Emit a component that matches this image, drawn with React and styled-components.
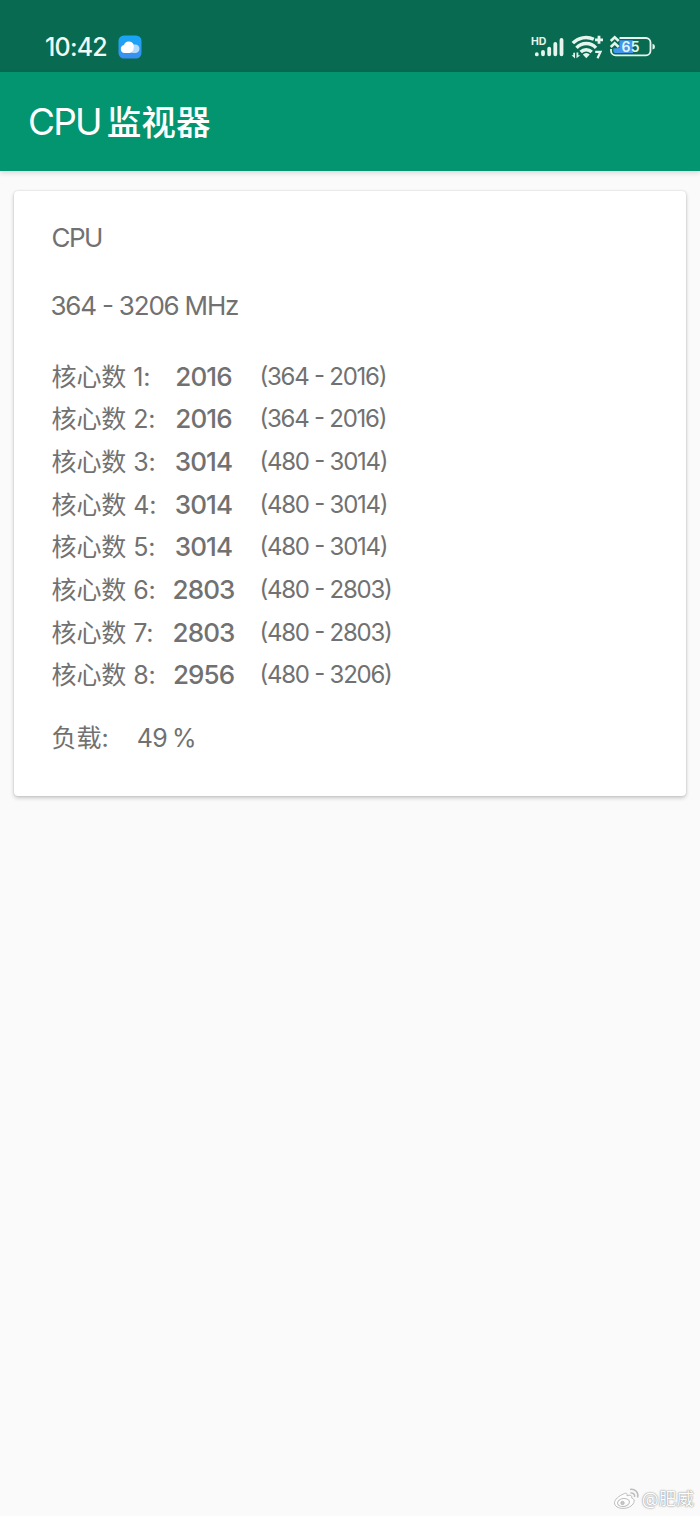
import React from "react";
import styled, { createGlobalStyle } from "styled-components";

const GlobalStyle = createGlobalStyle`
  body {
    margin: 0;
    background: #fafafa;
    color: #717171;
    font-family: Inter, "Noto Sans CJK SC", sans-serif;
  }
`;

const Screen = styled.div`
  display: flex;
  flex-direction: column;
  height: 1516px;
  overflow: hidden;
`;

const StatusBar = styled.div`
  display: flex;
  flex: none;
  align-items: center;
  height: 72px;
  box-sizing: border-box;
  padding: 21px 44px 0 45px;
  background: #086a51;
  color: #f0faf6;
`;

const Clock = styled.span`
  width: 73px;
  font-size: 25px;
  font-weight: 500;
  letter-spacing: -0.8px;
  white-space: nowrap;
`;

const StatusIcons = styled.svg`
  margin-left: auto;
`;

const AppBar = styled.header`
  display: flex;
  flex: none;
  align-items: center;
  gap: 6px;
  height: 99px;
  padding-left: 28px;
  background: #03956f;
  color: #fff;
  box-shadow: 0 2px 5px rgba(0, 0, 0, 0.14);
`;

const Title = styled.span`
  font-size: ${(p) => p.$size}px;
  font-weight: ${(p) => p.$weight || 400};
  letter-spacing: ${(p) => p.$spacing || 0}px;
  line-height: 50px;
`;

const Card = styled.section`
  display: flex;
  flex: none;
  flex-direction: column;
  box-sizing: border-box;
  height: 605px;
  margin: 20px 14px 0;
  padding: 29px 38px 0 37.5px;
  border-radius: 4px;
  background: #fff;
  box-shadow: 0 2px 4px rgba(0, 0, 0, 0.2), 0 0 2px rgba(0, 0, 0, 0.16);
`;

const Line = styled.div`
  height: 36px;
  font-size: 26px;
  line-height: 36px;
  letter-spacing: ${(p) => p.$spacing || 0}px;
  white-space: nowrap;
`;

const Range = styled(Line)`
  margin-top: 32px;
  margin-left: -1px;
  font-feature-settings: "case";
`;

const CoreTable = styled.div`
  display: grid;
  grid-template-columns: 114px 76px auto;
  grid-auto-rows: 42.65px;
  align-items: center;
  margin-top: 31.5px;
`;

const CoreName = styled.span`
  font-size: 25px;
  line-height: 36px;
  letter-spacing: -0.1px;
  white-space: nowrap;
`;

const CoreFreq = styled.span`
  font-size: 26px;
  font-weight: 500;
  line-height: 36px;
  letter-spacing: -0.9px;
  text-align: center;
`;

const CoreRange = styled.span`
  padding-left: 18px;
  font-size: 24px;
  line-height: 36px;
  letter-spacing: -1.25px;
  white-space: nowrap;
  font-feature-settings: "case";
`;

const Load = styled(Line)`
  display: flex;
  gap: 28px;
  margin-top: 23px;
  font-size: 25px;
`;

const LoadValue = styled.span`
  letter-spacing: -0.5px;
  word-spacing: -2px;
`;

const Watermark = styled.footer`
  display: flex;
  align-items: center;
  gap: 2px;
  margin: auto 6px 4px auto;
  color: #fdfdfd;
  font-size: 17.6px;
  line-height: 26px;
  text-shadow: 0 0 1px #888, 0 0 2px #aaa;
`;

const cores = [
  [2016, 364, 2016],
  [2016, 364, 2016],
  [3014, 480, 3014],
  [3014, 480, 3014],
  [3014, 480, 3014],
  [2803, 480, 2803],
  [2803, 480, 2803],
  [2956, 480, 3206],
];

const CloudIcon = () => (
  <svg width="24" height="24" viewBox="0 0 24 24">
    <defs>
      <linearGradient id="sky" x1="0" y1="0" x2="0" y2="1">
        <stop offset="0" stopColor="#16a8f7" />
        <stop offset="1" stopColor="#3c8eee" />
      </linearGradient>
    </defs>
    <rect x="0.5" y="0.5" width="23" height="23" rx="5.5" fill="url(#sky)" />
    <rect x="11" y="9.500" width="10.500" height="8.500" rx="4.200" fill="#b5dcff" />
    <path
      d="M6.500 18a4 4 0 0 1-.5-7.900 5 5 0 0 1 9.800 1.300c0 3.800-1.800 6.600-4.800 6.600z"
      fill="#fff"
    />
  </svg>
);

const SystemIcons = () => (
  <StatusIcons width="128" height="28" viewBox="528 33 128 28" fill="#e5f5ee">
    <text x="531" y="44.5" fontSize="10.5" fontWeight="700">
      HD
    </text>
    <g stroke="#e5f5ee" strokeWidth="3.8" strokeLinecap="round">
      <path d="M536.8 54.2v.2M543 51.8v2.500M549.200 48.600v5.700M555.300 44v10.300M561.500 40v14.300" />
    </g>
    <g fill="none" stroke="#e5f5ee" strokeWidth="3.4">
      <path d="M572.8 43.2a18.4 18.4 0 0 1 21-4M576.5 47.8a13.3 13.3 0 0 1 19.5 0M580.7 52a7.7 7.7 0 0 1 11 0" />
      <path d="M599 35.800v8M595 39.800h8" strokeWidth="2.8" />
      <path d="M595.2 51.800h5.300l-3 6.400" strokeWidth="2.2" />
    </g>
    <path d="M582.8 54.5a4.8 4.8 0 0 1 7 0l-3.5 3.8z" />
    <path d="M571.5 55.200h1.800v-2.400h1.700v5.800zM576.500 52.500v5.800l3.800-3h-2v-2.800z" />
    <path
      d="M619.5 38H646a4.5 4.5 0 0 1 4.5 4.5v8.3a4.5 4.5 0 0 1-4.5 4.5h-30.5a4.5 4.5 0 0 1-4.5-4.5V49"
      fill="none"
      stroke="#e5f5ee"
      strokeWidth="1.8"
    />
    <path d="M619.500 40.200h13.500v12.900h-16.500q-3.200 0-3.200-3.200V48.500l6.200-.5z" fill="#4395ee" />
    <path
      d="M610.7 41l4-3.700 4 3.700M610.7 47l4-3.700 4 3.700"
      fill="none"
      stroke="#e5f5ee"
      strokeWidth="2.5"
    />
    <path d="M652.5 43.8q2.5.5 2.5 2.9t-2.5 2.9z" />
    <text x="621.5" y="51.7" fontSize="14" fontWeight="600" letterSpacing="0.2">
      65
    </text>
  </StatusIcons>
);

const WeiboIcon = () => (
  <svg width="26" height="24" viewBox="0 0 26 24" fill="#fdfdfd" stroke="#bdbdbd" strokeWidth="1">
    <path d="M9.500 7c2.200-1.400 4.200-.9 3.500 1.800 3-1.200 5.400-.5 4.600 2.100 2.400.8 3.200 2.500 2.200 4.700-1.500 3.600-6 5.800-10.700 5.800C4.300 21.400.5 19.300.5 15.800.5 12.500 5 8.800 9.500 7z" />
    <ellipse cx="9.500" cy="15.500" rx="6" ry="4" transform="rotate(-8 9.500 15.500)" />
    <circle cx="8.500" cy="16" r="1.700" fill="#c6c6c6" />
    <path
      d="M16 2.500c5-.9 9 3 7.600 8M16.500 6c2.700-.5 4.700 1.500 4 4"
      fill="none"
      strokeWidth="1.5"
    />
  </svg>
);

const App = () => (
  <>
    <GlobalStyle />
    <Screen>
      <StatusBar>
        <Clock>10:42</Clock>
        <CloudIcon />
        <SystemIcons />
      </StatusBar>
      <AppBar>
        <Title $size={37} $spacing={-1.8}>
          CPU
        </Title>
        <Title $size={34.6} $weight={500}>
          监视器
        </Title>
      </AppBar>
      <Card>
        <Line $spacing={-1.5}>CPU</Line>
        <Range $spacing={-1.2}>364 - 3206 MHz</Range>
        <CoreTable>
          {cores.map(([freq, min, max], i) => (
            <React.Fragment key={i}>
              <CoreName>核心数 {i + 1}:</CoreName>
              <CoreFreq>{freq}</CoreFreq>
              <CoreRange>
                ({min} - {max})
              </CoreRange>
            </React.Fragment>
          ))}
        </CoreTable>
        <Load>
          <span>负载:</span>
          <LoadValue>49 %</LoadValue>
        </Load>
      </Card>
      <Watermark>
        <WeiboIcon />
        <span>@肥威</span>
      </Watermark>
    </Screen>
  </>
);

export default App;
